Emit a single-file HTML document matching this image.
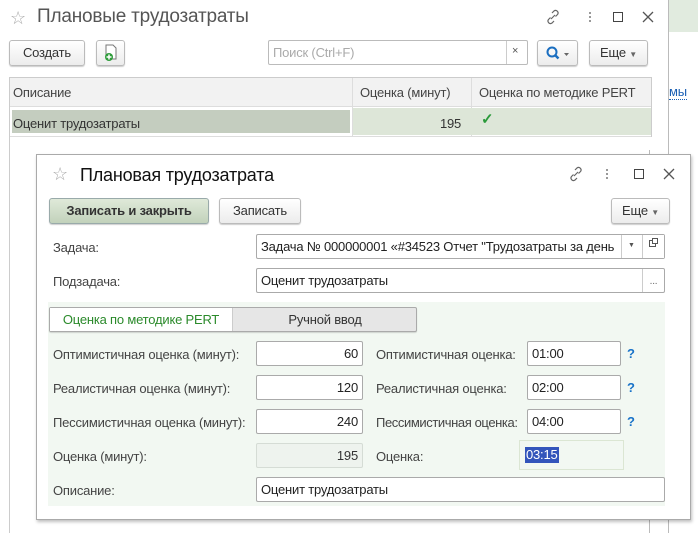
<!DOCTYPE html>
<html><head><meta charset="utf-8"><style>
*{box-sizing:border-box;margin:0;padding:0}
body{width:698px;height:533px;background:#fff;font-family:"Liberation Sans",Arial,sans-serif;font-size:13px;color:#333;position:relative;overflow:hidden;letter-spacing:-0.2px}
.a{position:absolute}
.btn{position:absolute;border:1px solid #bbb;border-radius:3px;background:linear-gradient(#fff,#ececec);box-shadow:0 1px 1px rgba(0,0,0,.2);text-align:center;color:#333;font-size:13px}
.inp{position:absolute;border:1px solid #aaa;border-radius:2px;background:#fff;height:25px;line-height:23px;padding:0 4px;font-size:13px;color:#222}
.lbl{position:absolute;color:#444;font-size:13px}
.r{text-align:right}
.q{position:absolute;color:#1a73c9;font-weight:bold;font-size:13px}
</style></head><body>
<div class="a" style="left:668px;top:0;width:1px;height:533px;background:#bbb"></div>
<div class="a" style="left:669px;top:0;width:29px;height:32px;background:#e1ebdf"></div>
<div class="a" style="left:669px;top:85px;color:#1a5fb4;font-size:13px;border-bottom:1px dotted #1a5fb4;line-height:14px">мы</div>
<div class="a" style="left:649px;top:150px;width:1px;height:383px;background:#bbb"></div>

<div class="a" style="left:10px;top:8px;color:#aaa;font-size:18px">☆</div>
<div class="a" style="left:37px;top:6px;color:#555;font-size:19px">Плановые трудозатраты</div>
<svg class="a" style="left:545px;top:9px" width="16" height="16" viewBox="0 0 16 16"><path d="M6 10l4-4M7 4l2-2a2.5 2.5 0 013.5 3.5l-2 2M9 12l-2 2a2.5 2.5 0 01-3.5-3.5l2-2" stroke="#666" fill="none" stroke-width="1.2"/></svg>
<div class="a" style="left:589px;top:11px;width:2px;height:12px;background:radial-gradient(circle,#777 1px,transparent 1px) 0 0/2px 4px"></div>
<div class="a" style="left:613px;top:12px;width:10px;height:10px;border:1.5px solid #444"></div>
<svg class="a" style="left:642px;top:11px" width="12" height="12"><path d="M1 1l10 10M11 1L1 11" stroke="#555" stroke-width="1.3"/></svg>

<div class="btn" style="left:9px;top:40px;width:76px;height:26px;line-height:24px">Создать</div>
<div class="btn" style="left:96px;top:40px;width:29px;height:26px"><svg width="16" height="18" viewBox="0 0 16 18" style="margin-top:3px"><path d="M3 1h7l3 3v11H3z" fill="#fff" stroke="#777"/><circle cx="6" cy="13" r="4" fill="#2e9c3a"/><path d="M6 10.5v5M3.5 13h5" stroke="#fff" stroke-width="1.5"/></svg></div>
<div class="a" style="left:268px;top:40px;width:260px;height:25px;border:1px solid #bbb;border-radius:2px;background:#fff"></div>
<div class="a" style="left:273px;top:45px;color:#aaa;font-size:13px">Поиск (Ctrl+F)</div>
<div class="a" style="left:506px;top:41px;width:1px;height:23px;background:#ccc"></div>
<div class="a" style="left:512px;top:45px;color:#555;font-size:11px">×</div>
<div class="btn" style="left:537px;top:40px;width:41px;height:26px"><svg width="30" height="20" viewBox="0 0 30 20" style="margin-top:3px"><circle cx="9" cy="8" r="4.5" stroke="#1a6ec0" stroke-width="2" fill="none"/><path d="M12 11l3.5 3.5" stroke="#1a6ec0" stroke-width="2.5"/><path d="M21 9h5l-2.5 3z" fill="#666"/></svg></div>
<div class="btn" style="left:589px;top:40px;width:59px;height:26px;line-height:24px">Еще <span style="font-size:8px;color:#666">▼</span></div>

<div class="a" style="left:9px;top:77px;width:643px;height:60px;border:1px solid #ccc;border-bottom:none"></div>
<div class="a" style="left:10px;top:78px;width:641px;height:29px;background:#f2f2f2;border-bottom:1px solid #ddd"></div>
<div class="a" style="left:352px;top:78px;width:1px;height:58px;background:#ddd"></div>
<div class="a" style="left:471px;top:78px;width:1px;height:58px;background:#ddd"></div>
<div class="a" style="left:13px;top:85px;color:#444">Описание</div>
<div class="a" style="left:360px;top:85px;color:#444">Оценка (минут)</div>
<div class="a" style="left:479px;top:85px;color:#444">Оценка по методике PERT</div>
<div class="a" style="left:353px;top:108px;width:298px;height:27px;background:#dde6d8"></div>
<div class="a" style="left:12px;top:110px;width:338px;height:23px;background:#c4cdbf"></div>
<div class="a" style="left:13px;top:116px;color:#333">Оценит трудозатраты</div>
<div class="a" style="left:440px;top:116px;color:#333">195</div>
<div class="a" style="left:481px;top:110px;color:#2a9a3a;font-size:15px;font-weight:bold">✓</div>
<div class="a" style="left:10px;top:136px;width:641px;height:1px;background:#ddd"></div>
<div class="a" style="left:9px;top:137px;width:1px;height:396px;background:#ccc"></div>

<div class="a" style="left:36px;top:154px;width:655px;height:366px;background:#fff;border:1px solid #aaa;box-shadow:1px 2px 3px rgba(0,0,0,.25)"></div>
<div class="a" style="left:52px;top:164px;color:#aaa;font-size:18px">☆</div>
<div class="a" style="left:80px;top:165px;color:#111;font-size:18px">Плановая трудозатрата</div>
<svg class="a" style="left:568px;top:166px" width="16" height="16" viewBox="0 0 16 16"><path d="M6 10l4-4M7 4l2-2a2.5 2.5 0 013.5 3.5l-2 2M9 12l-2 2a2.5 2.5 0 01-3.5-3.5l2-2" stroke="#666" fill="none" stroke-width="1.2"/></svg>
<div class="a" style="left:606px;top:168px;width:2px;height:12px;background:radial-gradient(circle,#777 1px,transparent 1px) 0 0/2px 4px"></div>
<div class="a" style="left:634px;top:169px;width:10px;height:10px;border:1.5px solid #444"></div>
<svg class="a" style="left:663px;top:168px" width="12" height="12"><path d="M1 1l10 10M11 1L1 11" stroke="#555" stroke-width="1.3"/></svg>

<div class="btn" style="left:49px;top:198px;width:160px;height:26px;line-height:24px;background:linear-gradient(#dfe9d9,#c2d2bb);border-color:#9aa;font-weight:bold;color:#333">Записать и закрыть</div>
<div class="btn" style="left:219px;top:198px;width:82px;height:26px;line-height:24px">Записать</div>
<div class="btn" style="left:611px;top:198px;width:59px;height:26px;line-height:24px">Еще <span style="font-size:8px;color:#666">▼</span></div>

<div class="lbl" style="left:53px;top:240px">Задача:</div>
<div class="inp" style="left:256px;top:234px;width:409px;overflow:hidden;white-space:nowrap">Задача № 000000001 «#34523 Отчет "Трудозатраты за день</div>
<div class="a" style="left:621px;top:235px;width:43px;height:23px;background:#fff;border-left:1px solid #ccc"></div>
<div class="a" style="left:642px;top:235px;width:1px;height:23px;background:#ccc"></div>
<div class="a" style="left:628px;top:242px;font-size:7px;color:#555">▼</div>
<div class="a" style="left:649px;top:240px;width:7px;height:7px;border:1px solid #555"></div>
<div class="a" style="left:652px;top:238px;width:6px;height:6px;border:1px solid #555;background:#fff"></div>
<div class="lbl" style="left:53px;top:274px">Подзадача:</div>
<div class="inp" style="left:256px;top:268px;width:409px">Оценит трудозатраты</div>
<div class="a" style="left:642px;top:269px;width:22px;height:23px;border-left:1px solid #ccc;color:#666;font-size:10px;text-align:center;line-height:26px">...</div>

<div class="a" style="left:48px;top:302px;width:617px;height:204px;background:#f2f8f2"></div>
<div class="a" style="left:49px;top:307px;width:368px;height:25px;border:1px solid #aaa;border-radius:2px;background:#e6e6e6;box-shadow:0 1px 1px rgba(0,0,0,.15)"></div>
<div class="a" style="left:50px;top:308px;width:183px;height:23px;background:#fff;color:#2b8a2b;line-height:23px;text-align:center;border-right:1px solid #ccc">Оценка по методике PERT</div>
<div class="a" style="left:234px;top:308px;width:182px;height:23px;line-height:23px;text-align:center;color:#333">Ручной ввод</div>

<div class="lbl" style="left:53px;top:347px">Оптимистичная оценка (минут):</div>
<div class="inp r" style="left:256px;top:341px;width:107px">60</div>
<div class="lbl" style="left:376px;top:347px">Оптимистичная оценка:</div>
<div class="inp" style="left:527px;top:341px;width:94px">01:00</div>
<div class="q" style="left:627px;top:346px">?</div>

<div class="lbl" style="left:53px;top:381px">Реалистичная оценка (минут):</div>
<div class="inp r" style="left:256px;top:375px;width:107px">120</div>
<div class="lbl" style="left:376px;top:381px">Реалистичная оценка:</div>
<div class="inp" style="left:527px;top:375px;width:94px">02:00</div>
<div class="q" style="left:627px;top:380px">?</div>

<div class="lbl" style="left:53px;top:415px">Пессимистичная оценка (минут):</div>
<div class="inp r" style="left:256px;top:409px;width:107px">240</div>
<div class="lbl" style="left:376px;top:415px;letter-spacing:-0.4px">Пессимистичная оценка:</div>
<div class="inp" style="left:527px;top:409px;width:94px">04:00</div>
<div class="q" style="left:627px;top:414px">?</div>

<div class="lbl" style="left:53px;top:449px">Оценка (минут):</div>
<div class="inp r" style="left:256px;top:443px;width:107px;background:#eef3ee;border-color:#d5dcd5;color:#333">195</div>
<div class="lbl" style="left:376px;top:449px">Оценка:</div>
<div class="a" style="left:519px;top:440px;width:105px;height:30px;border:1px solid #dbe6d3"></div>
<div class="a" style="left:525px;top:447px;background:#3355bb;color:#fff;line-height:16px;padding:0 1px">03:15</div>

<div class="lbl" style="left:53px;top:483px">Описание:</div>
<div class="inp" style="left:256px;top:477px;width:409px">Оценит трудозатраты</div>
</body></html>
